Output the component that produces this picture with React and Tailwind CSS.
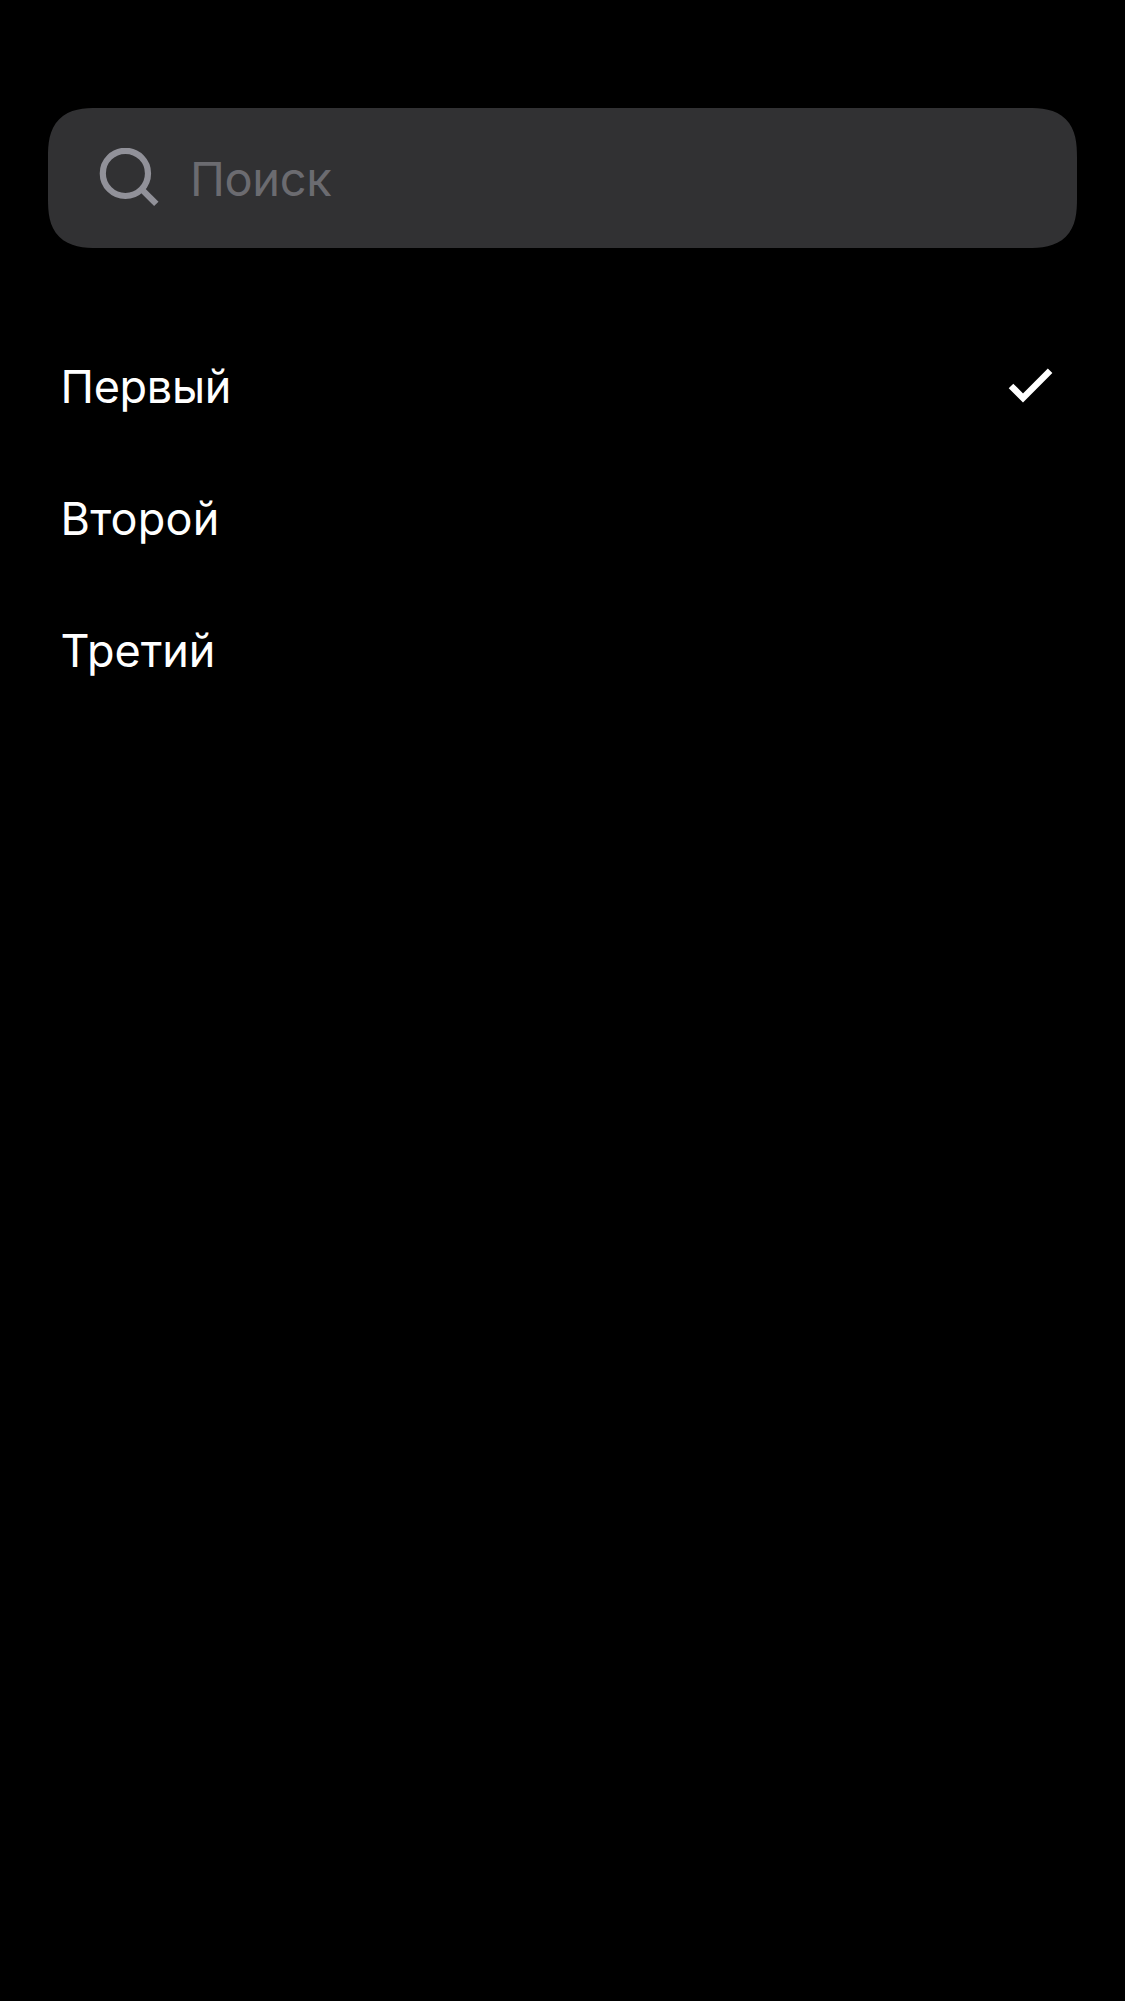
const rows = [
  { label: "Первый", selected: true, tracking: "tracking-[-0.3px]" },
  { label: "Второй", selected: false, tracking: "tracking-[0.2px]" },
  { label: "Третий", selected: false, tracking: "tracking-[-0.05px]" },
];

export default function App() {
  return (
    <main className="min-h-[2001px] w-full bg-black px-12 pt-[108px] font-['Inter',sans-serif]">
      <label className="flex h-[140px] items-center rounded-[50px] [corner-shape:superellipse(1.45)] bg-[#313133] pl-[51px]">
        <svg className="h-[60px] w-[60px] shrink-0" viewBox="0 0 60 60" fill="none" stroke="#919199" strokeWidth="6.2">
          <circle cx="26.4" cy="25.4" r="22.6" />
          <path d="M42 40.6L57.3 55.9" />
        </svg>
        <input className="mt-[3px] ml-[31px] min-w-0 flex-1 bg-transparent text-[47px] tracking-[-0.4px] text-white outline-none placeholder:text-[#6b6b70]" placeholder="Поиск" />
      </label>
      <ul className="mt-[73px]">
        {rows.map((row) => (
          <li key={row.label} className="flex h-[132px] items-center justify-between pr-6 pl-[12.5px] text-[45px] text-white">
            <span className={row.tracking}>{row.label}</span>
            {row.selected && (
              <svg className="h-9 w-11 overflow-visible" viewBox="0 0 44 36" fill="none" stroke="white" strokeWidth="6.4">
                <path d="M2 16.9L14 28.9L41.1 1.8" />
              </svg>
            )}
          </li>
        ))}
      </ul>
    </main>
  );
}
